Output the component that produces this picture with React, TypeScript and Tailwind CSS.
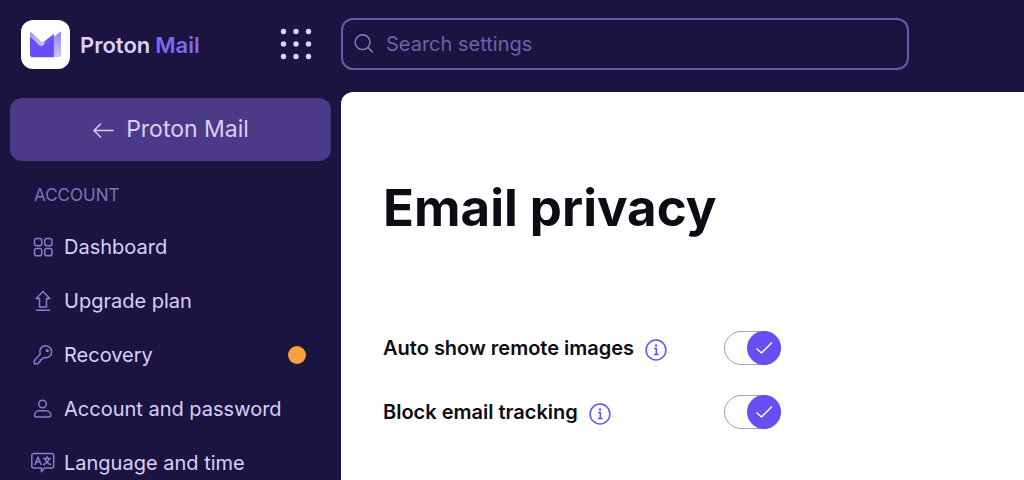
import type { ReactNode } from 'react';

function Logo() {
  return (
    <svg viewBox="0 0 49 49" className="size-[49px] shrink-0" aria-hidden="true">
      <defs>
        <linearGradient id="flap" x1="0" y1="0" x2="1" y2="1">
          <stop offset="0" stopColor="#a79af0" />
          <stop offset="1" stopColor="#cfc8fb" />
        </linearGradient>
        <linearGradient id="side" x1="0" y1="1" x2="0" y2="0">
          <stop offset="0" stopColor="#cdc6fb" />
          <stop offset="1" stopColor="#9384f0" />
        </linearGradient>
      </defs>
      <rect width="49" height="49" rx="12" fill="#fff" />
      <path d="M32 17.500 39.200 11.800Q40 11.400 40 12.400V34.500a2.800 2.800 0 0 1-2.800 2.800H32Z" fill="url(#side)" />
      <path d="M9 12.500Q9 11.400 9.900 12.100L19.500 20.800Q21.500 22.300 23.500 21.200L25 23 20.500 27 9 18Z" fill="url(#flap)" />
      <path d="M9 16.500 18.300 25.200Q20.300 26.800 22.300 25L33 16V37.300H11.800A2.800 2.800 0 0 1 9 34.500Z" fill="#6a4df5" />
      <path d="M23.500 21.200 33 13.800V17.500L23.500 25Z" fill="#7159f2" />
      <path d="M33 16.800 33 37.300" stroke="#a091f5" strokeWidth="0.500" />
    </svg>
  );
}

function Icon({ children }: { children: ReactNode }) {
  return (
    <svg
      viewBox="0 0 24 24"
      className="size-6 shrink-0 text-[#8b7bc8]"
      fill="none"
      stroke="currentColor"
      strokeWidth="1.500"
      strokeLinecap="round"
      strokeLinejoin="round"
      aria-hidden="true"
    >
      {children}
    </svg>
  );
}

const navItems = [
  {
    label: 'Dashboard',
    icon: (
      <>
        <rect x="3.500" y="3.500" width="7.300" height="7.300" rx="2.200" />
        <rect x="13.700" y="3.500" width="7.300" height="7.300" rx="2.200" />
        <rect x="3.500" y="13.500" width="7.300" height="7.300" rx="2.200" />
        <rect x="13.700" y="13.500" width="7.300" height="7.300" rx="2.200" />
      </>
    ),
  },
  {
    label: 'Upgrade plan',
    icon: <path d="M12 2.500 18.800 9.500H15.500V18H8.500V9.500H5.200ZM5.500 21.200H18.500" />,
  },
  {
    label: 'Recovery',
    alert: true,
    icon: (
      <>
        <path d="M14.800 2.800a6 6 0 1 1-2 11.700L10.500 16.700H9.200V18.400L6.700 20.800H3.300V17.400L9.200 11.200A6 6 0 0 1 14.800 2.800Z" />
        <circle cx="16.300" cy="7.600" r="0.900" fill="currentColor" />
      </>
    ),
  },
  {
    label: 'Account and password',
    icon: (
      <>
        <circle cx="11.500" cy="7" r="3.800" />
        <path d="M8 13.800H15.200C18 13.800 19.800 16 19.800 18.300A1.700 1.700 0 0 1 18.100 20H5.200A1.700 1.700 0 0 1 3.500 18.300C3.500 16 5.300 13.800 8 13.800Z" />
      </>
    ),
  },
  {
    label: 'Language and time',
    icon: (
      <>
        <path d="M2.800 2.500H20.700A2 2 0 0 1 22.700 4.500V15A2 2 0 0 1 20.700 17H13.500L10.500 20.700V17H2.800A2 2 0 0 1 0.800 15V4.500A2 2 0 0 1 2.800 2.500Z" />
        <path d="M4 13.500 7 6 10 13.500M5 11H9M12.500 7.500H19.500M16 5.500V7.500M18 7.500C17.500 10.500 15.500 12.500 12.500 13.500M14 7.500C14.500 10.500 16.500 12.500 19.500 13.500" />
      </>
    ),
  },
];

function Setting({ id, label }: { id: string; label: string }) {
  return (
    <div className="flex h-16 items-center">
      <div className="flex w-[341px] items-center gap-[11px]">
        <label htmlFor={id} className="text-[20px] leading-6 font-semibold">
          {label}
        </label>
        <button type="button" aria-label={`About: ${label}`} className="mt-1 text-[#6a4df5]">
          <svg viewBox="0 0 22 22" className="size-[22px]" fill="none" stroke="currentColor" strokeWidth="1.500">
            <circle cx="11" cy="11" r="9.900" />
            <path d="M9 9.500H11.300V15.500M8.800 15.500H13.500" />
            <circle cx="11" cy="6.500" r="1.200" fill="currentColor" stroke="none" />
          </svg>
        </button>
      </div>
      <label className="flex h-[34px] w-[57px] cursor-pointer rounded-full border border-[#a5a3a9] bg-white">
        <input id={id} type="checkbox" role="switch" defaultChecked className="peer sr-only" />
        <span className="-my-px -mr-px flex size-[34px] items-center justify-center rounded-full bg-[#6a4df5] peer-checked:ml-auto">
          <svg viewBox="0 0 18 14" className="h-[14px] w-[18px]" fill="none" stroke="#fff" strokeWidth="1.500" strokeLinecap="round" strokeLinejoin="round" aria-hidden="true">
            <path d="M2 8 6.500 12 16.500 2" />
          </svg>
        </span>
      </label>
    </div>
  );
}

export default function App() {
  return (
    <div className="flex h-screen overflow-hidden bg-[#1b1340] font-['Inter','Liberation_Sans',sans-serif]">
      <aside className="w-[341px] shrink-0 px-[10px]">
        <div className="flex h-[98px] items-start justify-between pt-5 pr-[18px] pl-[11px]">
          <a href="#home" className="flex items-center gap-[10px]">
            <Logo />
            <span className="text-[22px] leading-7 font-semibold text-[#d9d0ff]">
              Proton<span className="ml-[5px] text-[#8068f0]">Mail</span>
            </span>
          </a>
          <button type="button" aria-label="Apps" className="mt-[7px] text-[#dcd3fa]">
            <svg viewBox="0 0 34 34" className="size-[34px]" fill="currentColor">
              {[4.500, 17, 29.500].map((y) =>
                [4.500, 17, 29.500].map((x) => <circle key={`${x}-${y}`} cx={x} cy={y} r="2.700" />),
              )}
            </svg>
          </button>
        </div>
        <button type="button" className="flex h-[63px] w-full items-center justify-center gap-3 rounded-xl bg-[#4a3a88] text-[23px] text-[#d9cffc]">
          <svg viewBox="0 0 22 20" className="h-5 w-[22px]" fill="none" stroke="currentColor" strokeWidth="1.500" strokeLinecap="round" strokeLinejoin="round" aria-hidden="true">
            <path d="M21 10.500H2M8.500 4 2 10.500 8.500 17" />
          </svg>
          Proton Mail
        </button>
        <nav aria-labelledby="account-heading" className="pt-[22px]">
          <h2 id="account-heading" className="pl-6 text-[17px] leading-6 text-[#8272bc]">
            ACCOUNT
          </h2>
          <ul className="pt-[13px]">
            {navItems.map((item) => (
              <li key={item.label}>
                <a href="#settings" className="flex h-[54px] items-center gap-[9px] pr-[25px] pl-[21px] text-[20px] whitespace-nowrap text-[#d9cffc]">
                  <Icon>{item.icon}</Icon>
                  {item.label}
                  {item.alert && <span className="ml-auto size-[18px] rounded-full bg-[#f5a33b]" />}
                </a>
              </li>
            ))}
          </ul>
        </nav>
      </aside>
      <div className="flex min-w-0 flex-1 flex-col">
        <header className="h-[92px] shrink-0 pt-[18px]">
          <label className="flex h-[52px] w-[568px] max-w-full items-center gap-3 rounded-xl border-2 border-[#6b5ba6] px-[11px]">
            <svg viewBox="0 0 20 20" className="size-5 shrink-0 text-[#8b7bc8]" fill="none" stroke="currentColor" strokeWidth="1.500" strokeLinecap="round" aria-hidden="true">
              <circle cx="8.600" cy="8.200" r="7.400" />
              <path d="M14 13.500 18.500 18" />
            </svg>
            <input
              type="search"
              aria-label="Search settings"
              placeholder="Search settings"
              className="min-w-0 flex-1 bg-transparent text-[20px] text-white outline-none placeholder:text-[#6f60aa]"
            />
          </label>
        </header>
        <main className="flex-1 rounded-tl-xl bg-white pt-[84px] pl-[42px] text-[#0c0c14]">
          <h1 className="text-[51px] leading-[64px] font-bold">Email privacy</h1>
          <div className="pt-[76px]">
            <Setting id="remote-images" label="Auto show remote images" />
            <Setting id="block-tracking" label="Block email tracking" />
          </div>
        </main>
      </div>
    </div>
  );
}
